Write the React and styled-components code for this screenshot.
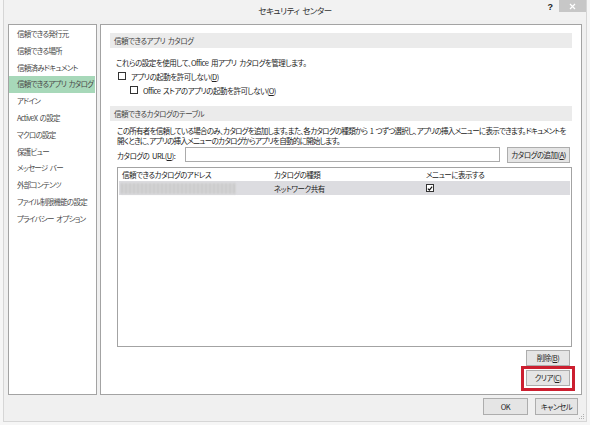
import React from "react";
import styled, { createGlobalStyle } from "styled-components";

const Global = createGlobalStyle`
  html, body { margin: 0; padding: 0; background: #f6f6f6; }
  body {
    font-family: "Noto Sans CJK JP", "Noto Sans", sans-serif;
    font-feature-settings: "palt";
    font-size: 7.5px;
    letter-spacing: -0.5px;
    word-spacing: 1.5px;
    color: #222;
  }
  * { box-sizing: border-box; }
`;

const Stage = styled.div`
  width: 590px;
  height: 425px;
  overflow: hidden;
`;

const Window = styled.div`
  margin: 0 3px;
  height: 422px;
  background: #f0f0f0;
  border: 1px solid #d6d6d6;
  border-top: none;
  display: flex;
  flex-direction: column;
  position: relative;
`;

const TitleBar = styled.div`
  height: 20px;
  display: grid;
  grid-template-columns: 1fr auto 1fr;
  align-items: start;
  background: #f2f2f2;
`;

const Title = styled.div`
  grid-column: 2;
  font-size: 8.5px;
  letter-spacing: -0.5px;
  line-height: 20px;
  color: #333;
`;

const Controls = styled.div`
  grid-column: 3;
  justify-self: end;
  display: flex;
  align-items: flex-start;
  gap: 6px;
`;

const Help = styled.span`
  font-family: "Liberation Sans", sans-serif;
  font-weight: bold;
  font-size: 9px;
  letter-spacing: 0;
  line-height: 14px;
  color: #222;
`;

const CloseBtn = styled.div`
  width: 27px;
  height: 12px;
  background: #c7c7c7;
  display: flex;
  align-items: center;
  justify-content: center;
`;

const Main = styled.div`
  flex: 1;
  display: flex;
  gap: 3px;
  padding: 4px 4px 0 4px;
  min-height: 0;
`;

const Nav = styled.div`
  width: 89px;
  flex: none;
  background: #fff;
  border: 1px solid #a3a3a3;
  padding-top: 1px;
  display: flex;
  flex-direction: column;
  overflow: hidden;
`;

const NavItem = styled.div`
  height: 16.8px;
  line-height: 16.8px;
  padding-left: 8px;
  margin-right: 1px;
  color: #4a4a4a;
  white-space: nowrap;
  letter-spacing: -0.75px;
  background: ${(p) => (p.$active ? "#a7d8b9" : "transparent")};
`;

const Content = styled.div`
  flex: 1;
  min-width: 0;
  overflow: hidden;
  background: #fff;
  border: 1px solid #a3a3a3;
  padding: 8px 9px 0 9px;
  display: flex;
  flex-direction: column;
`;

const Band = styled.div`
  height: 15px;
  line-height: 15px;
  background: #ebebeb;
  padding-left: 4px;
  color: #444;
  margin-top: ${(p) => p.$mt || 0}px;
`;

const Desc = styled.div`
  margin-top: 9px;
  line-height: 12px;
  padding-left: 6px;
  color: #222;
`;

const CheckRow = styled.div`
  height: 14px;
  display: flex;
  align-items: center;
  gap: 5px;
  padding-left: ${(p) => p.$indent}px;
`;

const Box = styled.span`
  width: 8px;
  height: 8px;
  border: 1px solid #333;
  background: #fff;
  display: inline-flex;
  align-items: center;
  justify-content: center;
  flex: none;
`;

const Key = styled.span`
  text-decoration: underline;
`;

const Para = styled.div`
  margin-top: 5px;
  line-height: 10px;
  padding-left: 7px;
  white-space: nowrap;
  letter-spacing: -0.72px;
`;

const UrlRow = styled.div`
  height: 18px;
  display: flex;
  align-items: center;
  padding-left: 7px;
  padding-right: 2px;
`;

const UrlLabel = styled.span`
  width: 68px;
  flex: none;
`;

const Input = styled.div`
  width: 315px;
  height: 15px;
  border: 1px solid #ababab;
  background: #fff;
  margin-top: -1px;
  flex: none;
`;

const Button = styled.div`
  width: ${(p) => p.$w}px;
  height: ${(p) => p.$h || 16}px;
  line-height: ${(p) => (p.$h || 16) - 2}px;
  border: 1px solid #adadad;
  background: #e5e5e5;
  text-align: center;
  color: #222;
  flex: none;
  white-space: nowrap;
`;

const AddButton = styled(Button)`
  margin-left: auto;
`;

const Table = styled.div`
  margin-top: 3px;
  margin-left: 7px;
  height: 180px;
  border: 1px solid #a3a3a3;
  background: #fff;
  display: flex;
  flex-direction: column;
`;

const TRow = styled.div`
  display: grid;
  grid-template-columns: 151px 152px 1fr;
  height: ${(p) => p.$h}px;
  align-items: center;
  background: ${(p) => (p.$selected ? "#dcdce0" : "transparent")};
  margin: 0 1px;
  color: #222;
`;

const Cell = styled.div`
  padding-left: ${(p) => (p.$first ? 3 : 4)}px;
  display: flex;
  align-items: center;
`;

const Blurred = styled.div`
  width: 115px;
  height: 11px;
  margin-left: -1px;
  background: repeating-linear-gradient(90deg, #bdbdbd 0 2px, #dedede 2px 4px),
    #ccc;
  filter: blur(0.8px);
  opacity: 0.85;
`;

const SideButtons = styled.div`
  display: flex;
  flex-direction: column;
  align-items: flex-end;
  padding-right: 2px;
  margin-top: 3px;
  gap: 4px;
`;

const Highlight = styled.div`
  position: relative;
  &::after {
    content: "";
    position: absolute;
    left: -5px;
    right: -5px;
    top: -4px;
    bottom: -5px;
    border: 3px solid #cc1f30;
    pointer-events: none;
  }
`;

const Footer = styled.div`
  height: 26px;
  display: flex;
  justify-content: flex-end;
  align-items: flex-start;
  gap: 7px;
  padding: 3px 8px 0 0;
`;

const Grip = styled.svg`
  position: absolute;
  right: 1px;
  bottom: 1px;
`;

const navItems = [
  "信頼できる発行元",
  "信頼できる場所",
  "信頼済みドキュメント",
  "信頼できるアプリ カタログ",
  "アドイン",
  "ActiveX の設定",
  "マクロの設定",
  "保護ビュー",
  "メッセージ バー",
  "外部コンテンツ",
  "ファイル制限機能の設定",
  "プライバシー オプション",
];

export default function App() {
  return (
    <Stage>
      <Global />
      <Window>
        <TitleBar>
          <Title>セキュリティ センター</Title>
          <Controls>
            <Help>?</Help>
            <CloseBtn>
              <svg width="7" height="7" viewBox="0 0 7 7">
                <path d="M1 1L6 6M6 1L1 6" stroke="#fff" strokeWidth="1.2" />
              </svg>
            </CloseBtn>
          </Controls>
        </TitleBar>
        <Main>
          <Nav>
            {navItems.map((t, i) => (
              <NavItem key={t} $active={i === 3}>
                {t}
              </NavItem>
            ))}
          </Nav>
          <Content>
            <Band>信頼できるアプリ カタログ</Band>
            <Desc>これらの設定を使用して、Office 用アプリ カタログを管理します。</Desc>
            <CheckRow $indent={8}>
              <Box />
              <span>
                アプリの起動を許可しない(<Key>D</Key>)
              </span>
            </CheckRow>
            <CheckRow $indent={20}>
              <Box />
              <span>
                Office ストアのアプリの起動を許可しない(<Key>O</Key>)
              </span>
            </CheckRow>
            <Band $mt={9}>信頼できるカタログのテーブル</Band>
            <Para>
              この所有者を信頼している場合のみ、カタログを追加します。また、各カタログの種類から 1 つずつ選択し、アプリの挿入メニューに表示できます。ドキュメントを
              <br />
              開くときに、アプリの挿入メニューのカタログからアプリを自動的に開始します。
            </Para>
            <UrlRow>
              <UrlLabel>
                カタログの URL(<Key>U</Key>):
              </UrlLabel>
              <Input />
              <AddButton $w={63}>
                カタログの追加(<Key>A</Key>)
              </AddButton>
            </UrlRow>
            <Table>
              <TRow $h={13}>
                <Cell $first>信頼できるカタログのアドレス</Cell>
                <Cell>カタログの種類</Cell>
                <Cell>メニューに表示する</Cell>
              </TRow>
              <TRow $h={14} $selected>
                <Cell $first>
                  <Blurred />
                </Cell>
                <Cell>ネットワーク共有</Cell>
                <Cell>
                  <Box>
                    <svg width="7" height="7" viewBox="0 0 7 7">
                      <path d="M1 3.6L2.8 5.4L6 1.4" stroke="#111" strokeWidth="1.4" fill="none" />
                    </svg>
                  </Box>
                </Cell>
              </TRow>
            </Table>
            <SideButtons>
              <Button $w={44}>
                削除(<Key>B</Key>)
              </Button>
              <Highlight>
                <Button $w={44}>
                  クリア(<Key>C</Key>)
                </Button>
              </Highlight>
            </SideButtons>
          </Content>
        </Main>
        <Footer>
          <Button $w={45} $h={17}>OK</Button>
          <Button $w={43} $h={17}>キャンセル</Button>
        </Footer>
        <Grip width="6" height="6" viewBox="0 0 6 6">
          <rect x="4" y="0" width="1" height="1" fill="#b0b0b0" />
          <rect x="2" y="2" width="1" height="1" fill="#b0b0b0" />
          <rect x="4" y="2" width="1" height="1" fill="#b0b0b0" />
          <rect x="0" y="4" width="1" height="1" fill="#b0b0b0" />
          <rect x="2" y="4" width="1" height="1" fill="#b0b0b0" />
          <rect x="4" y="4" width="1" height="1" fill="#b0b0b0" />
        </Grip>
      </Window>
    </Stage>
  );
}
